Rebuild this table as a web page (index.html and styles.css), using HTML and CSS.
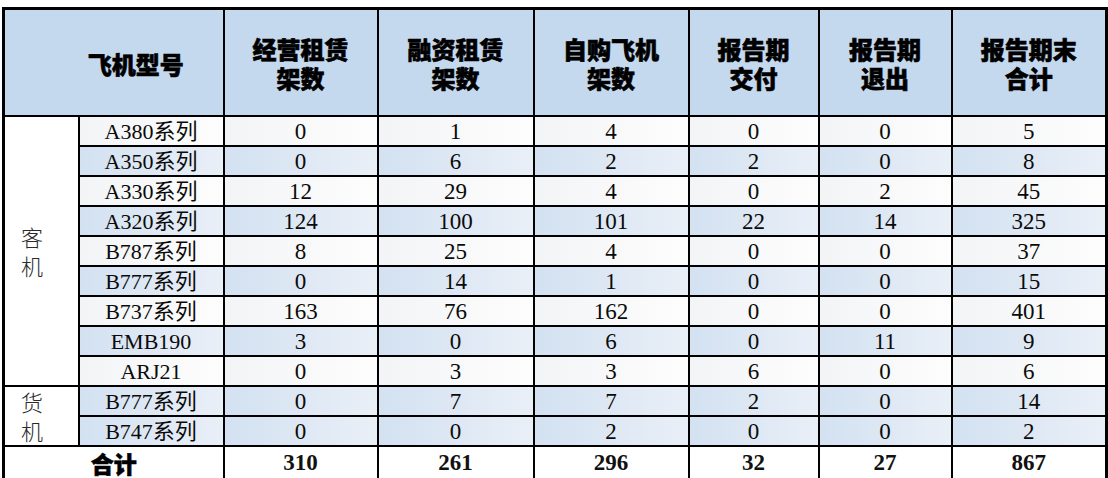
FILE: index.html
```html
<!DOCTYPE html>
<html lang="zh">
<head>
<meta charset="utf-8">
<link rel="stylesheet" href="styles.css">
</head>
<body>
<div class="page">
<table class="fleet">
<colgroup>
<col class="c-cat"><col class="c-model"><col class="c-a"><col class="c-b"><col class="c-c"><col class="c-d"><col class="c-e"><col class="c-f">
</colgroup>
<thead>
<tr>
<th colspan="2" class="h-model">飞机型号</th>
<th>经营租赁<br>架数</th>
<th>融资租赁<br>架数</th>
<th>自购飞机<br>架数</th>
<th>报告期<br>交付</th>
<th>报告期<br>退出</th>
<th>报告期末<br>合计</th>
</tr>
</thead>
<tbody>
<tr class="w"><td rowspan="9" class="cat">客<br>机</td><td class="model">A380系列</td><td>0</td><td>1</td><td>4</td><td>0</td><td>0</td><td>5</td></tr>
<tr class="b"><td class="model">A350系列</td><td>0</td><td>6</td><td>2</td><td>2</td><td>0</td><td>8</td></tr>
<tr class="w"><td class="model">A330系列</td><td>12</td><td>29</td><td>4</td><td>0</td><td>2</td><td>45</td></tr>
<tr class="b"><td class="model">A320系列</td><td>124</td><td>100</td><td>101</td><td>22</td><td>14</td><td>325</td></tr>
<tr class="w"><td class="model">B787系列</td><td>8</td><td>25</td><td>4</td><td>0</td><td>0</td><td>37</td></tr>
<tr class="b"><td class="model">B777系列</td><td>0</td><td>14</td><td>1</td><td>0</td><td>0</td><td>15</td></tr>
<tr class="w"><td class="model">B737系列</td><td>163</td><td>76</td><td>162</td><td>0</td><td>0</td><td>401</td></tr>
<tr class="b"><td class="model">EMB190</td><td>3</td><td>0</td><td>6</td><td>0</td><td>11</td><td>9</td></tr>
<tr class="w"><td class="model">ARJ21</td><td>0</td><td>3</td><td>3</td><td>6</td><td>0</td><td>6</td></tr>
<tr class="b"><td rowspan="2" class="cat">货<br>机</td><td class="model">B777系列</td><td>0</td><td>7</td><td>7</td><td>2</td><td>0</td><td>14</td></tr>
<tr class="b"><td class="model">B747系列</td><td>0</td><td>0</td><td>2</td><td>0</td><td>0</td><td>2</td></tr>
</tbody>
<tfoot>
<tr class="total"><td colspan="2" class="t-label">合计</td><td>310</td><td>261</td><td>296</td><td>32</td><td>27</td><td>867</td></tr>
</tfoot>
</table>
</div>
</body>
</html>
```
FILE: styles.css
```css
html, body {
  margin: 0;
  padding: 0;
  background: #ffffff;
}
.page {
  padding: 7px 3px 0 2px;
}
.fleet {
  border-collapse: collapse;
  table-layout: fixed;
  width: 1103px;
  border: 3px solid #000;
  font-family: "Liberation Serif", "Noto Sans CJK SC", serif;
  font-size: 23px;
  color: #0a0a0a;
}
.c-cat { width: 75px; }
.c-model { width: 145px; }
.c-a { width: 154px; }
.c-b { width: 156px; }
.c-c { width: 155px; }
.c-d { width: 130px; }
.c-e { width: 133px; }
.c-f { width: 155px; }
.fleet th, .fleet td {
  border: 2px solid #000;
  padding: 0;
  text-align: center;
  vertical-align: middle;
  overflow: hidden;
  white-space: nowrap;
}
.fleet thead th {
  height: 104px;
  background: #c4d8ee;
  font-family: "Noto Sans CJK SC", sans-serif;
  font-weight: 900;
  font-size: 24px;
  line-height: 29px;
  color: #000;
  -webkit-text-stroke: 0.6px #000;
  padding-top: 1px;
}
.fleet thead th.h-model {
  padding-left: 44px;
}
.fleet tbody td {
  height: 26px;
  line-height: 26px;
  padding-top: 2px;
}
.fleet tbody td.model {
  font-size: 22px;
}
.fleet tbody tr.w td {
  background: linear-gradient(to right, #f3f4f6, #fdfdfd);
}
.fleet tbody tr.b td {
  background: linear-gradient(to right, #d3e1f1, #e9eff7);
}
.fleet tbody td.cat {
  background: #fff !important;
  text-align: left;
  padding-left: 16px;
  padding-top: 0;
  font-family: "Noto Sans CJK SC", sans-serif;
  font-weight: 300;
  font-size: 22px;
  line-height: 29px;
  color: #2a2a2a;
}
.fleet tfoot td {
  height: 31px;
  line-height: 28px;
  background: #fff;
  font-weight: 700;
  font-size: 23px;
  color: #111;
}
.fleet tfoot td.t-label {
  font-family: "Noto Sans CJK SC", sans-serif;
  font-weight: 900;
  font-size: 23px;
  color: #000;
  -webkit-text-stroke: 0.6px #000;
}
```
